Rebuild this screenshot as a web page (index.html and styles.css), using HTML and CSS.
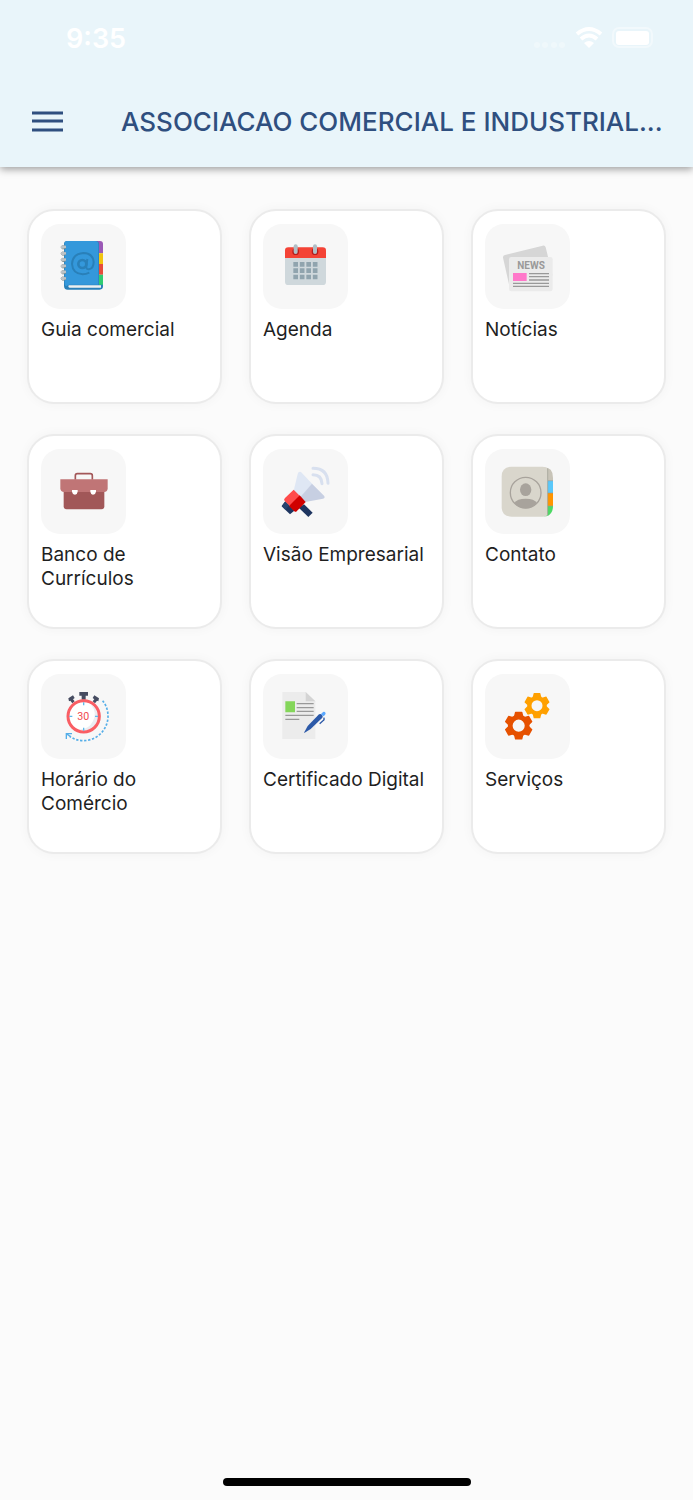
FILE: index.html
```html
<!DOCTYPE html>
<html lang="pt-BR">
  <head>
    <meta charset="UTF-8" />
    <meta name="viewport" content="width=device-width, initial-scale=1.0" />
    <title>Associacao Comercial e Industrial</title>
    <link rel="stylesheet" href="styles.css">
  </head>
  <body>
    <header class="top">
      <div class="status">
        <span class="clock">9:35</span>
        <svg class="status-icons" viewBox="0 0 120 30" aria-hidden="true">
          <g fill="#fff">
            <g opacity="0.3">
              <circle cx="3" cy="22" r="3" />
              <circle cx="11" cy="22" r="3" />
              <circle cx="20" cy="22" r="3" />
              <circle cx="28" cy="22" r="3" />
            </g>
            <path d="M55 25l-5-5q5-4 10 0z" />
            <rect x="82" y="8" width="33" height="14" rx="3" />
            <path d="M120 11q3 4 0 8z" opacity="0.4" />
          </g>
          <g fill="none" stroke="#fff">
            <path d="M43 11q12-10 24 0" stroke-width="4" />
            <path d="M47 16q8-7 16 0" stroke-width="4" />
            <rect x="79" y="5" width="39" height="19" rx="6" stroke-width="2" opacity="0.4" />
          </g>
        </svg>
      </div>
      <div class="appbar">
        <button class="menu" aria-label="Menu">
          <svg viewBox="0 0 31 21"><path d="M0 2h31M0 10h31M0 19h31" stroke="currentColor" stroke-width="3" /></svg>
        </button>
        <h1>ASSOCIACAO COMERCIAL E INDUSTRIAL...</h1>
      </div>
    </header>

    <main class="grid">
      <a class="card" href="#guia">
        <svg class="icon" viewBox="4 6 255 255" aria-hidden="true">
          <path d="M150 57h31q9 0 9 9v28h-40z" fill="#9b59b6" />
          <path d="M150 94h40v32h-40z" fill="#f1c40f" />
          <path d="M150 126h40v32h-40z" fill="#e74c3c" />
          <path d="M150 158h40v32h-40z" fill="#2ecc71" />
          <path d="M82 57h86q10 0 10 10v121h12v5q0 10-10 10H84q-11 0-11-12V66q0-9 9-9z" fill="#2980b9" />
          <path d="M83 57h83q10 0 10 10v121H89q-6 0-8 5-6-2-6-8V66q0-9 8-9z" fill="#3498db" />
          <path d="M90 190h94v7H90q-4 0-4-4t4-3z" fill="#ecf0f1" />
          <g fill="none" stroke="#2980b9" stroke-width="6">
            <circle cx="128" cy="126" r="12" stroke-width="8" />
            <path d="M143 111l-3 23q0 9 8 8 14-3 14-22-2-26-31-27-32 2-34 33 2 29 32 31 10 0 20-5" />
          </g>
          <g fill="none" stroke="#7f8c8d" stroke-width="3">
            <path d="M79 78q-13 6-14-2t14-3M79 97q-13 6-14-2t14-3M79 116q-13 6-14-2t14-3M79 135q-13 6-14-2t14-3M79 153q-13 6-14-2t14-3M79 172q-13 6-14-2t14-3" />
          </g>
          <g fill="none" stroke="#bdc3c7" stroke-width="5">
            <path d="M79 75q-14 3-14 0t14-1M79 94q-14 3-14 0t14-1M79 113q-14 3-14 0t14-1M79 132q-14 3-14 0t14-1M79 150q-14 3-14 0t14-1M79 169q-14 3-14 0t14-1" />
          </g>
        </svg>
        <span>Guia comercial</span>
      </a>

      <a class="card" href="#agenda">
        <svg class="icon" viewBox="4 6 255 255" aria-hidden="true">
          <rect x="70" y="84" width="123" height="105" rx="10" fill="#cfd8dc" />
          <path d="M70 108V86q0-10 10-10h103q10 0 10 10v22z" fill="#f44336" />
          <circle cx="102" cy="89" r="10" fill="#b71c1c" />
          <circle cx="160" cy="89" r="10" fill="#b71c1c" />
          <rect x="96" y="67" width="12" height="29" rx="6" fill="#b0bec5" />
          <rect x="154" y="67" width="12" height="29" rx="6" fill="#b0bec5" />
          <path d="M95 127h73M95 146h73M95 165h73" stroke="#90a4ae" stroke-width="14" stroke-dasharray="14 5.500" />
        </svg>
        <span>Agenda</span>
      </a>

      <a class="card" href="#noticias">
        <svg class="icon" viewBox="4 6 255 255" aria-hidden="true">
          <path d="M64 99l113-28q7-2 9 5l20 81q1 6-5 8L84 192q-6 1-8-5L58 107q-1-6 6-8z" fill="#d6d6d6" />
          <rect x="76" y="105" width="131" height="103" rx="7" fill="#ebebeb" />
          <text class="news-text" x="142" y="141" text-anchor="middle" fill="#999">NEWS</text>
          <path d="M88 153h41v24H88z" fill="#ff78ca" />
          <path d="M136 155h60M136 164h60M136 174h60M88 184h108M88 193h108" stroke="#999" stroke-width="4" />
        </svg>
        <span>Notícias</span>
      </a>

      <a class="card" href="#curriculos">
        <svg class="icon" viewBox="4 6 255 255" aria-hidden="true">
          <path d="M107 98V86q0-6 6-6h39q6 0 6 6v12" fill="none" stroke="#a35758" stroke-width="5" />
          <path d="M72 128h122v50q0 9-9 9H81q-9 0-9-9z" fill="#a15758" />
          <path d="M62 97h142v27q0 11-11 11H74q-12 0-12-11z" fill="#c07576" />
          <path d="M97 129h17v5q-1 8-8 9-8-1-9-9zM152 129h17v5q-1 8-9 9-7-1-8-9z" fill="#fff" />
        </svg>
        <span>Banco de Currículos</span>
      </a>

      <a class="card" href="#visao">
        <svg class="icon" viewBox="4 6 255 255" aria-hidden="true">
          <path d="M71 163l27 28-13 11-25-24z" fill="#1e3560" />
          <path d="M71 163l12 12-12 13-11-11z" fill="#28446f" />
          <path d="M127 172l26 25-13 13-29-28z" fill="#1e3560" />
          <path d="M96 131l12-50q2-9 10-6l34 36-37 43z" fill="#dfe7f4" />
          <path d="M151 110l36 36q5 6-3 9l-57 11-13-14z" fill="#c7cfe2" />
          <path d="M96 128l18 18-29 31-16-15q-4-5 1-9z" fill="#ff4b4b" />
          <path d="M114 145l18 20-27 28q-3 3-7 0l-16-16z" fill="#d00000" />
          <g fill="none" stroke="#d8e0ef" stroke-width="9" stroke-linecap="round">
            <path d="M154 64q44 0 45 45" />
            <path d="M154 83q26 0 27 27" />
          </g>
        </svg>
        <span>Visão Empresarial</span>
      </a>

      <a class="card" href="#contato">
        <svg class="icon" viewBox="4 6 255 255" aria-hidden="true">
          <path d="M180 61q28 0 28 31v9h-28z" fill="#c8c4b8" />
          <path d="M180 101h28v37h-28z" fill="#5ac8fa" />
          <path d="M180 138h28v39h-28z" fill="#ff9500" />
          <path d="M180 177h28q0 25-20 31h-8z" fill="#4cd964" />
          <path d="M192 101h16M192 138h16M192 177h16" stroke="#9a9b90" stroke-width="2" />
          <path d="M84 59h93q8 0 15 5v141q-7 4-15 4H84q-30 0-30-29V89q0-30 30-30z" fill="#d9d6cc" />
          <path d="M192 64v141" stroke="#9a9b90" stroke-width="2" />
          <circle cx="126" cy="137" r="46" fill="none" stroke="#a8a39c" stroke-width="4" />
          <ellipse cx="126" cy="128" rx="17" ry="19" fill="#a8a39c" />
          <path d="M92 168q8-13 34-13t34 13q-13 16-34 16t-34-16z" fill="#a8a39c" />
        </svg>
        <span>Contato</span>
      </a>

      <a class="card" href="#horario">
        <svg class="icon" viewBox="4 6 255 255" aria-hidden="true">
          <g fill="#464c61">
            <path d="M119 60h26v11h-7v12h-12V71h-7z" />
            <path d="M86 79l14-9 5 8-5 4 5 6-7 6-6-8-4 2z" />
            <path d="M178 79l-14-9-5 8 5 4-5 6 7 6 6-8 4 2z" />
          </g>
          <circle cx="132" cy="133" r="47" fill="#fff" />
          <path d="M154 98a41 41 0 0 1-36 74 45 45 0 0 0 36-74z" fill="#ebedf2" />
          <circle cx="132" cy="133" r="47" fill="none" stroke="#f95e64" stroke-width="9" />
          <path d="M132 91v9M132 167v9M89 133h9M166 133h9" stroke="#60b8ea" stroke-width="4" />
          <text class="timer-text" x="131" y="144" text-anchor="middle" fill="#f0494f">30</text>
          <path d="M189 86a74 74 0 0 1-57 120q-24 0-42-13" fill="none" stroke="#55aee8" stroke-width="5" stroke-dasharray="7 5" />
          <path d="M97 185H80v16M81 186l12 8" fill="none" stroke="#55aee8" stroke-width="4" />
        </svg>
        <span>Horário do Comércio</span>
      </a>

      <a class="card" href="#certificado">
        <svg class="icon" viewBox="4 6 255 255" aria-hidden="true">
          <path d="M62 60h70l29 28v113H62z" fill="#ececec" />
          <path d="M132 60l29 28h-29z" fill="#d4d4d4" />
          <path d="M71 88h29v33H71z" fill="#84d65a" />
          <path d="M105 95h51M105 107h51M105 118h51M71 130h85M71 142h42" stroke="#999" stroke-width="4" />
          <path d="M127 182l11-20 34-35q5-3 9 1t1 9l-35 34-18 11z" fill="#2c59a8" />
          <path d="M186 137q4 6-3 10l-9 8" fill="none" stroke="#2c59a8" stroke-width="4" />
          <path d="M178 126l4-4q3-5 8-2 4 4 0 9l-5 4z" fill="#5aa8ff" />
        </svg>
        <span>Certificado Digital</span>
      </a>

      <a class="card" href="#servicos">
        <svg class="icon" viewBox="4 6 255 255" aria-hidden="true">
          <defs>
            <g id="gear">
              <circle r="23" fill="none" stroke="currentColor" stroke-width="13" />
              <g fill="currentColor">
                <path id="tooth" d="M-13-25l3-12q0-1 2-1H8q2 0 2 1l3 12z" />
                <use href="#tooth" transform="rotate(60)" />
                <use href="#tooth" transform="rotate(120)" />
                <use href="#tooth" transform="rotate(180)" />
                <use href="#tooth" transform="rotate(240)" />
                <use href="#tooth" transform="rotate(300)" />
              </g>
            </g>
          </defs>
          <use class="gear-amber" href="#gear" transform="translate(160 101)" />
          <use class="gear-orange" href="#gear" transform="translate(105 161) scale(1.1)" />
        </svg>
        <span>Serviços</span>
      </a>
    </main>

    <div class="home-bar"></div>
  </body>
</html>
```
FILE: styles.css
```css
* {
  box-sizing: border-box;
}

body {
  margin: 0;
  min-height: 100vh;
  display: flex;
  flex-direction: column;
  background: #fbfbfb;
  color: #1f1f1f;
  font-family: Inter, "Liberation Sans", sans-serif;
}

.top {
  background: #e9f5fa;
  box-shadow: 0 2px 8px rgba(0, 0, 0, 0.4);
}

.status {
  display: flex;
  align-items: center;
  justify-content: space-between;
  height: 76px;
  padding: 0 39px 0 66px;
  color: #fff;
}

.clock {
  font-size: 27px;
  font-weight: 600;
}

.status-icons {
  width: 120px;
  height: 30px;
}

.appbar {
  display: flex;
  align-items: center;
  gap: 58px;
  height: 90px;
  margin-bottom: 1px;
  padding: 0 32px;
  color: #2f4f7f;
}

.menu {
  flex: none;
  padding: 0;
  border: none;
  background: none;
  color: inherit;
  cursor: pointer;
}

.menu svg {
  display: block;
  width: 31px;
  height: 21px;
}

h1 {
  margin: 0;
  font-size: 26px;
  font-weight: 500;
  white-space: nowrap;
}

.grid {
  display: grid;
  grid-template-columns: repeat(3, 1fr);
  gap: 30px 27px;
  padding: 42px 27px;
}

.card {
  aspect-ratio: 1;
  padding: 13px 12px;
  border: 2px solid #ebebeb;
  border-radius: 27px;
  background: #fff;
  box-shadow: 0 0 12px rgba(0, 0, 0, 0.04);
  color: inherit;
  font-size: 19px;
  line-height: 24px;
  text-decoration: none;
}

.card span {
  display: block;
}

.icon {
  display: block;
  width: 85px;
  height: 85px;
  margin-bottom: 9px;
  border-radius: 19px;
  background: #f7f7f7;
}

.news-text {
  font: bold 30px Roboto, sans-serif;
}

.timer-text {
  font: 32px Roboto, sans-serif;
}

.gear-amber {
  color: #ffa000;
}

.gear-orange {
  color: #e65100;
}

.home-bar {
  width: 248px;
  height: 8px;
  margin: auto auto 14px;
  border-radius: 4px;
  background: #000;
}
```
